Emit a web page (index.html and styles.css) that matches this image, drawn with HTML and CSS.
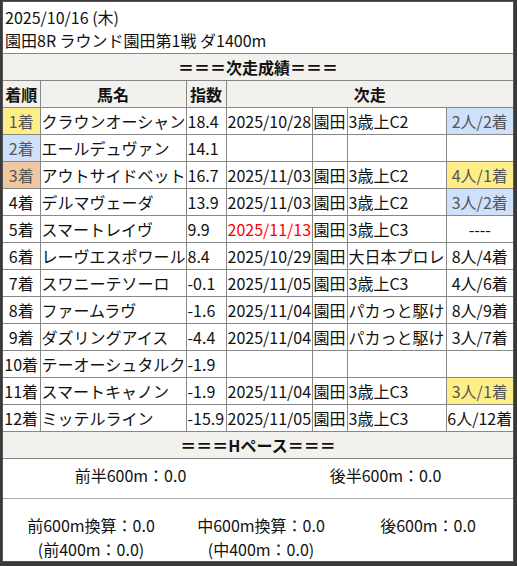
FILE: index.html
```html
<!DOCTYPE html>
<html lang="ja">
<head>
<meta charset="utf-8">
<link rel="stylesheet" href="styles.css">
</head>
<body>
<div class="frame">
  <div class="title">
    <div>2025/10/16 (木)</div>
    <div>園田8R ラウンド園田第1戦 ダ1400m</div>
  </div>
  <table class="results">
    <colgroup>
      <col class="c-rank"><col class="c-name"><col class="c-idx"><col class="c-date"><col class="c-place"><col class="c-race"><col class="c-res">
    </colgroup>
    <tr><th colspan="7" class="section">＝＝＝次走成績＝＝＝</th></tr>
    <tr><th>着順</th><th>馬名</th><th>指数</th><th colspan="4">次走</th></tr>
    <tr><td class="rank gold">1着</td><td>クラウンオーシャン</td><td>18.4</td><td>2025/10/28</td><td>園田</td><td>3歳上C2</td><td class="res silver">2人/2着</td></tr>
    <tr><td class="rank silver">2着</td><td>エールデュヴァン</td><td>14.1</td><td></td><td></td><td></td><td class="res"></td></tr>
    <tr><td class="rank bronze">3着</td><td>アウトサイドベット</td><td>16.7</td><td>2025/11/03</td><td>園田</td><td>3歳上C2</td><td class="res gold">4人/1着</td></tr>
    <tr><td class="rank">4着</td><td>デルマヴェーダ</td><td>13.9</td><td>2025/11/03</td><td>園田</td><td>3歳上C2</td><td class="res silver">3人/2着</td></tr>
    <tr><td class="rank">5着</td><td>スマートレイヴ</td><td>9.9</td><td class="future">2025/11/13</td><td>園田</td><td>3歳上C3</td><td class="res">----</td></tr>
    <tr><td class="rank">6着</td><td>レーヴエスポワール</td><td>8.4</td><td>2025/10/29</td><td>園田</td><td>大日本プロレ</td><td class="res">8人/4着</td></tr>
    <tr><td class="rank">7着</td><td>スワニーテソーロ</td><td>-0.1</td><td>2025/11/05</td><td>園田</td><td>3歳上C3</td><td class="res">4人/6着</td></tr>
    <tr><td class="rank">8着</td><td>ファームラヴ</td><td>-1.6</td><td>2025/11/04</td><td>園田</td><td>パカっと駆け</td><td class="res">8人/9着</td></tr>
    <tr><td class="rank">9着</td><td>ダズリングアイス</td><td>-4.4</td><td>2025/11/04</td><td>園田</td><td>パカっと駆け</td><td class="res">3人/7着</td></tr>
    <tr><td class="rank">10着</td><td>テーオーシュタルク</td><td>-1.9</td><td></td><td></td><td></td><td class="res"></td></tr>
    <tr><td class="rank">11着</td><td>スマートキャノン</td><td>-1.9</td><td>2025/11/04</td><td>園田</td><td>3歳上C3</td><td class="res gold">3人/1着</td></tr>
    <tr><td class="rank">12着</td><td>ミッテルライン</td><td>-15.9</td><td>2025/11/05</td><td>園田</td><td>3歳上C3</td><td class="res">6人/12着</td></tr>
    <tr><th colspan="7" class="section">＝＝＝Hペース＝＝＝</th></tr>
  </table>
  <div class="pace-half">
    <div>前半600m：0.0</div>
    <div>後半600m：0.0</div>
  </div>
  <div class="pace-split">
    <div>前600m換算：0.0<br>(前400m：0.0)</div>
    <div>中600m換算：0.0<br>(中400m：0.0)</div>
    <div>後600m：0.0</div>
  </div>
</div>
</body>
</html>
```
FILE: styles.css
```css
* { box-sizing: border-box; }
html, body { margin: 0; padding: 0; }
body {
  background: #3a3a3a;
  width: 517px;
  height: 566px;
  overflow: hidden;
  font-family: "Noto Sans CJK JP", "Noto Sans", sans-serif;
  font-size: 16px;
  color: #111;
}
.frame {
  margin: 1px 0 0 2px;
  width: 512px;
  height: 561px;
  background: #fff;
  border: 1px solid #555;
}
.title {
  padding: 4px 2px 1px;
  line-height: 23px;
  border-bottom: 1px solid #888;
}
.results {
  width: 510px;
  border-collapse: collapse;
  border-style: hidden;
  table-layout: fixed;
}
.c-rank { width: 37px; }
.c-name { width: 146px; }
.c-idx { width: 40px; }
.c-date { width: 86px; }
.c-place { width: 35px; }
.c-race { width: 99px; }
.c-res { width: 67px; }
.results th,
.results td {
  border: 1px solid #888;
  padding: 0 1px;
  line-height: 26px;
  white-space: nowrap;
  overflow: hidden;
  text-align: left;
  font-weight: normal;
}
.results th {
  background: #f2f1ed;
  font-weight: bold;
  text-align: center;
}
.results td.rank,
.results td.res { text-align: center; padding: 0; }
.gold { background: #ffee88; color: #555; }
.silver { background: #cfe0fb; color: #555; }
.bronze { background: #f0c8a0; color: #555; }
.future { color: #f00; }
.pace-half {
  display: grid;
  grid-template-columns: 255px 255px;
  text-align: center;
  line-height: 23px;
  padding: 5px 0 11px;
  border-top: 1px solid #888;
}
.pace-split {
  display: grid;
  grid-template-columns: 176px 164px 170px;
  text-align: center;
  line-height: 24px;
  padding-top: 14px;
  border-top: 1px solid #aaa;
}
```
